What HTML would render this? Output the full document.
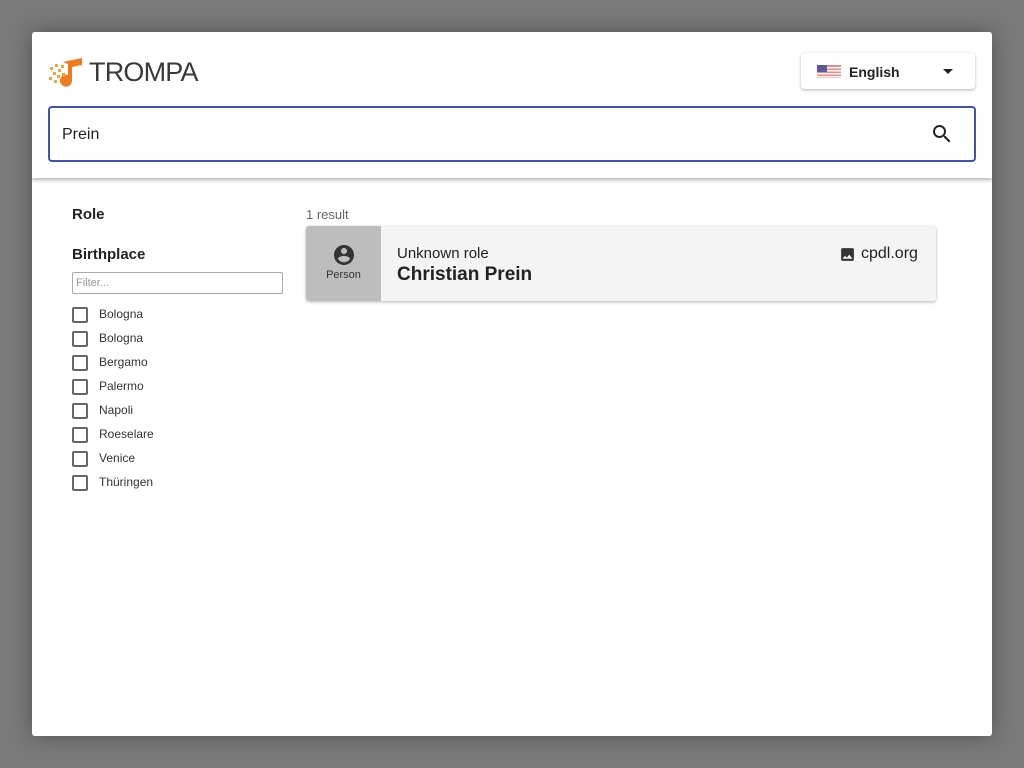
<!DOCTYPE html>
<html><head><meta charset="utf-8"><style>
body{margin:0;width:1024px;height:768px;background:#7a7a7a;font-family:"Liberation Sans",sans-serif;position:relative;overflow:hidden}
.win{position:absolute;left:32px;top:32px;width:960px;height:704px;background:#fff;border-radius:3px;overflow:hidden;box-shadow:0 0 20px rgba(0,0,0,.35)}
.hdr{position:absolute;left:0;top:0;width:960px;height:146px;background:#fff;box-shadow:0 2px 4px rgba(0,0,0,.3)}
.logo{position:absolute;font-size:27px;color:#3a3a3a;letter-spacing:-0.8px}
.lang{position:absolute;left:769px;top:21px;width:174px;height:36px;border-radius:4px;box-shadow:0 1px 3px rgba(0,0,0,.3);background:#fff}
.search{position:absolute;left:16px;top:74px;width:924px;height:52px;border:2px solid #3f51b5;border-radius:4px}
.cb{position:absolute;left:40px;width:12px;height:12px;border:2px solid #666;border-radius:2px}
.cl{position:absolute;left:67px;font-size:12px;color:#333}
</style></head><body>
<div class="win">
<div class="hdr">
<svg style="position:absolute;left:16px;top:24px" width="36" height="32" viewBox="0 0 36 32"><path d="M15 6 L34 2 L34 9 L24 11 L24 24 A6 6 0 1 1 20 19 L20 8 Z" fill="#f07a1e"/><g fill="#f5a040"><rect x="2" y="11" width="3" height="3"/><rect x="7" y="8" width="3" height="3"/><rect x="5" y="16" width="3" height="3"/><rect x="10" y="13" width="3" height="3"/><rect x="1" y="21" width="3" height="3"/><rect x="9" y="19" width="3" height="3"/><rect x="13" y="9" width="3" height="3"/><rect x="14" y="17" width="3" height="3"/><rect x="6" y="24" width="3" height="3"/></g></svg>
<div class="logo" style="left:57px;top:25px">TROMPA</div>
<div class="lang"><svg style="position:absolute;left:16px;top:12px" width="24" height="13"><rect width="24" height="13" fill="#e88"/><g fill="#fff"><rect y="2" width="24" height="1.5"/><rect y="5" width="24" height="1.5"/><rect y="8" width="24" height="1.5"/><rect y="11" width="24" height="1.5"/></g><rect width="10" height="7" fill="#5a5a9a"/></svg>
<span style="position:absolute;left:48px;top:11px;font-size:14px;font-weight:bold;color:#222">English</span>
<svg style="position:absolute;left:142px;top:16px" width="10" height="5"><path d="M0 0h10L5 5z" fill="#222"/></svg></div>
<div class="search"><span style="position:absolute;left:12px;top:18px;font-size:16px;color:#222">Prein</span>
<svg style="position:absolute;left:880px;top:14px" width="24" height="24" viewBox="0 0 24 24"><path d="M15.5 14h-.79l-.28-.27A6.47 6.47 0 0 0 16 9.5 6.5 6.5 0 1 0 9.5 16c1.61 0 3.09-.59 4.23-1.57l.27.28v.79l5 4.99L20.49 19l-4.99-5zm-6 0C7.01 14 5 11.99 5 9.5S7.01 5 9.5 5 14 7.01 14 9.5 11.99 14 9.5 14z" fill="#222"/></svg></div>
</div>
<div style="position:absolute;left:40px;top:174px;font-size:15px;font-weight:bold;color:#222">Role</div>
<div style="position:absolute;left:40px;top:214px;font-size:15px;font-weight:bold;color:#222">Birthplace</div>
<div style="position:absolute;left:40px;top:240px;width:206px;height:20px;border:1px solid #aaa;border-radius:2px;font-size:11px;color:#999;line-height:20px;padding-left:3px">Filter...</div>
<div class="cb" style="top:275px"></div><div class="cl" style="top:275px">Bologna</div>
<div class="cb" style="top:299px"></div><div class="cl" style="top:299px">Bologna</div>
<div class="cb" style="top:323px"></div><div class="cl" style="top:323px">Bergamo</div>
<div class="cb" style="top:347px"></div><div class="cl" style="top:347px">Palermo</div>
<div class="cb" style="top:371px"></div><div class="cl" style="top:371px">Napoli</div>
<div class="cb" style="top:395px"></div><div class="cl" style="top:395px">Roeselare</div>
<div class="cb" style="top:419px"></div><div class="cl" style="top:419px">Venice</div>
<div class="cb" style="top:443px"></div><div class="cl" style="top:443px">Thüringen</div>
<div style="position:absolute;left:274px;top:175px;font-size:13px;color:#666">1 result</div>
<div style="position:absolute;left:274px;top:194px;width:630px;height:75px;background:#f4f4f4;border-radius:3px;box-shadow:0 1px 3px rgba(0,0,0,.3);overflow:hidden">
<div style="position:absolute;left:0;top:0;width:75px;height:75px;background:#bdbdbd"></div>
<svg style="position:absolute;left:26px;top:17px" width="24" height="24" viewBox="0 0 24 24"><path d="M12 2C6.48 2 2 6.48 2 12s4.48 10 10 10 10-4.48 10-10S17.52 2 12 2zm0 3c1.66 0 3 1.34 3 3s-1.34 3-3 3-3-1.34-3-3 1.34-3 3-3zm0 14.2a7.2 7.2 0 0 1-6-3.22c.03-1.99 4-3.08 6-3.08 1.99 0 5.97 1.09 6 3.08a7.2 7.2 0 0 1-6 3.22z" fill="#333"/></svg>
<div style="position:absolute;left:0;width:75px;top:43px;text-align:center;font-size:11px;color:#333">Person</div>
<div style="position:absolute;left:91px;top:19px;font-size:15px;color:#222">Unknown role</div>
<div style="position:absolute;left:91px;top:38px;font-size:19px;font-weight:bold;color:#222">Christian Prein</div>
<svg style="position:absolute;left:533px;top:20px" width="17" height="17" viewBox="0 0 24 24"><path d="M21 19V5c0-1.1-.9-2-2-2H5c-1.1 0-2 .9-2 2v14c0 1.1.9 2 2 2h14c1.1 0 2-.9 2-2zM8.5 13.5l2.5 3 3.5-4.5 4.5 6H5l3.5-4.5z" fill="#333"/></svg>
<div style="position:absolute;left:555px;top:19px;font-size:16px;color:#222">cpdl.org</div>
</div>
</div>
</body></html>
